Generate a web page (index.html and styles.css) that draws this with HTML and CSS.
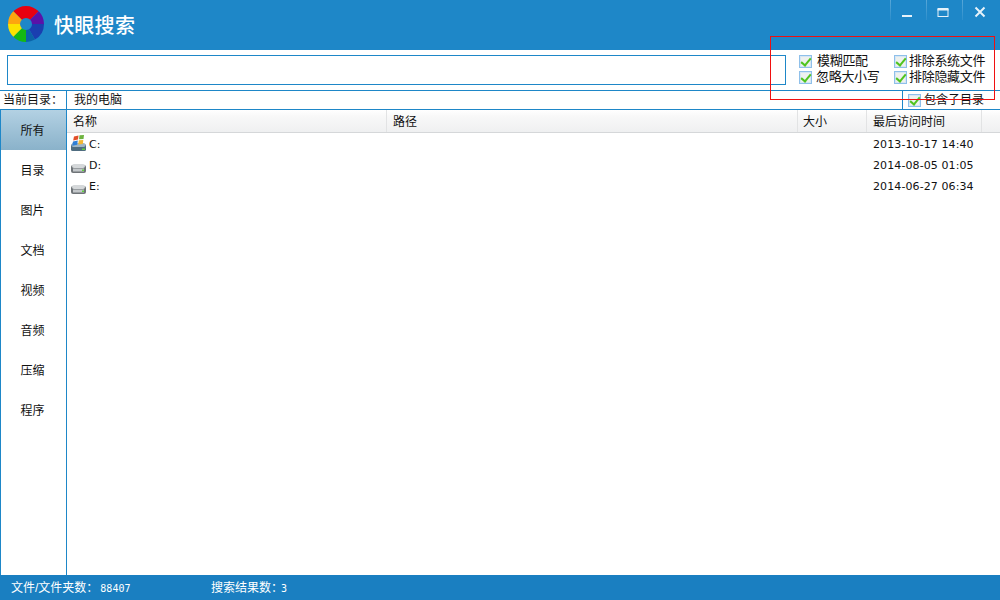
FILE: index.html
```html
<!DOCTYPE html>
<html lang="zh-CN">
<head>
  <meta charset="UTF-8" />
  <title>快眼搜索</title>
  <link rel="stylesheet" href="styles.css">
</head>
<body>
  <div class="window">
    <div class="titlebar">
      <svg class="logo" width="36" height="36" viewBox="-18 -18 36 36">
        <path d="M-12.7 -12.7A18 18 0 0 1 12.7 -12.7L4.2 -4.2A6 6 0 0 0 -4.2 -4.2Z" fill="#e8000f"/>
        <path d="M12.7 -12.7A18 18 0 0 1 18 0L6 0A6 6 0 0 0 4.2 -4.2Z" fill="#5a12a8"/>
        <path d="M18 0A18 18 0 0 1 9 15.6L3 5.2A6 6 0 0 0 6 0Z" fill="#1a3fb0"/>
        <path d="M9 15.6A18 18 0 0 1 0 18L0 6A6 6 0 0 0 3 5.2Z" fill="#0b63a8"/>
        <path d="M0 18A18 18 0 0 1 -12.7 12.7L-4.2 4.2A6 6 0 0 0 0 6Z" fill="#14b814"/>
        <path d="M-12.7 12.7A18 18 0 0 1 -18 0L-6 0A6 6 0 0 0 -4.2 4.2Z" fill="#fce200"/>
        <path d="M-18 0A18 18 0 0 1 -12.7 -12.7L-4.2 -4.2A6 6 0 0 0 -6 0Z" fill="#fda50f"/>
      </svg>
      <div class="title">快眼搜索</div>
      <div class="winbtns">
        <div class="winbtn">
          <svg width="12" height="12" viewBox="0 0 12 12"><rect x="1" y="9" width="10" height="2" fill="#e6f2fa"/></svg>
        </div>
        <div class="winbtn">
          <svg width="12" height="12" viewBox="0 0 12 12"><rect x="1" y="3.500" width="10" height="7" fill="none" stroke="#e6f2fa" stroke-width="1"/><rect x="0.500" y="2" width="11" height="2.500" fill="#e6f2fa"/></svg>
        </div>
        <div class="winbtn">
          <svg width="12" height="12" viewBox="0 0 12 12"><path d="M1.500 1.500L10.500 10.500M10.500 1.500L1.500 10.500" stroke="#e6f2fa" stroke-width="2"/></svg>
        </div>
      </div>
    </div>

    <div class="searchrow">
      <input class="searchbox" type="text" />
      <div class="options">
        <div class="optcol first">
          <div class="opt"><span class="check"></span><span class="optgap">模糊匹配</span></div>
          <div class="opt"><span class="check"></span><span>忽略大小写</span></div>
        </div>
        <div class="optcol">
          <div class="opt"><span class="check"></span><span>排除系统文件</span></div>
          <div class="opt"><span class="check"></span><span>排除隐藏文件</span></div>
        </div>
      </div>
    </div>

    <div class="pathrow">
      <div class="pathlabel">当前目录：</div>
      <div class="pathvalue">我的电脑</div>
      <div class="subdir"><span class="check"></span><span>包含子目录</span></div>
    </div>

    <div class="main">
      <ul class="sidebar">
        <li class="active">所有</li>
        <li>目录</li>
        <li>图片</li>
        <li>文档</li>
        <li>视频</li>
        <li>音频</li>
        <li>压缩</li>
        <li>程序</li>
      </ul>
      <div class="list">
        <div class="listhead">
          <div class="col c-name">名称</div>
          <div class="col c-path">路径</div>
          <div class="col c-size">大小</div>
          <div class="col c-time">最后访问时间</div>
          <div class="col c-rest"></div>
        </div>
        <div class="listrow">
          <div class="c-name cell">
            <svg class="drive" width="18" height="18" viewBox="0 0 18 18">
              <rect x="1" y="9" width="15" height="7" rx="1.500" fill="#4f6d80"/>
              <rect x="1.500" y="8" width="14" height="4" rx="2" fill="#9fb6c4"/>
              <rect x="12" y="13.500" width="3" height="1.500" fill="#5fd03c"/>
              <path d="M4 1.500L8.500 0.500L8 4.500L3.200 5.500Z" fill="#e2502a"/>
              <path d="M9.500 0.300L14 0L13.500 4L9 4.300Z" fill="#6db33f"/>
              <path d="M3 6.500L7.800 5.500L7.200 9.800L2.200 10.800Z" fill="#2f7fd6"/>
              <path d="M8.800 5.300L13.300 5L12.800 9L8.200 9.600Z" fill="#f2b632"/>
            </svg>
            <span>C:</span>
          </div>
          <div class="c-path"></div>
          <div class="c-size"></div>
          <div class="c-time cell">2013-10-17 14:40</div>
        </div>
        <div class="listrow">
          <div class="c-name cell">
            <svg class="drive" width="18" height="18" viewBox="0 0 18 18">
              <rect x="1" y="9" width="15" height="8" rx="2" fill="#6f7478"/>
              <rect x="2" y="8" width="13" height="4" rx="2" fill="#d5d8da"/>
              <rect x="3" y="12.500" width="11" height="3" fill="#c3c7ca"/>
              <rect x="12" y="13.500" width="2" height="1.500" fill="#5fd03c"/>
            </svg>
            <span>D:</span>
          </div>
          <div class="c-path"></div>
          <div class="c-size"></div>
          <div class="c-time cell">2014-08-05 01:05</div>
        </div>
        <div class="listrow">
          <div class="c-name cell">
            <svg class="drive" width="18" height="18" viewBox="0 0 18 18">
              <rect x="1" y="9" width="15" height="8" rx="2" fill="#6f7478"/>
              <rect x="2" y="8" width="13" height="4" rx="2" fill="#d5d8da"/>
              <rect x="3" y="12.500" width="11" height="3" fill="#c3c7ca"/>
              <rect x="12" y="13.500" width="2" height="1.500" fill="#5fd03c"/>
            </svg>
            <span>E:</span>
          </div>
          <div class="c-path"></div>
          <div class="c-size"></div>
          <div class="c-time cell">2014-06-27 06:34</div>
        </div>
      </div>
    </div>

    <div class="statusbar">
      <div class="stat-files">文件/文件夹数：<span class="num num-files">88407</span></div>
      <div>搜索结果数：<span class="num num-found">3</span></div>
    </div>

    <div class="redbox"></div>
  </div>
</body>
</html>
```

FILE: styles.css
```css
* {
  box-sizing: border-box;
}
body {
  margin: 0;
  font-family: "Liberation Sans", "Noto Sans CJK SC", sans-serif;
  font-size: 12px;
  color: #111;
  background-color: #fff;
}
.window {
  position: relative;
  width: 1000px;
  height: 600px;
  display: flex;
  flex-direction: column;
  overflow: hidden;
}
.titlebar {
  height: 50px;
  display: flex;
  align-items: flex-start;
  background-color: #1e87c8;
  padding: 6px 0 0 8px;
}
.logo {
  flex: none;
}
.title {
  margin: 7px 0 0 10px;
  font-family: "Noto Sans CJK SC", sans-serif;
  font-size: 20px;
  font-weight: 500;
  line-height: 24px;
  letter-spacing: 0.3px;
  color: #fff;
}
.winbtns {
  margin: -6px 0 0 auto;
  display: flex;
}
.winbtn {
  width: 36px;
  height: 20px;
  border-left: 1px solid;
  border-image: linear-gradient(#5aa8d8, #2a8dcb) 1;
  display: flex;
  align-items: center;
  justify-content: center;
  padding: 4px 3px 0 0;
}
.winbtn:last-child {
  width: 38px;
}
.searchrow {
  height: 41px;
  display: flex;
  padding: 5px 0 0 7px;
  border-bottom: 1px solid #1e87c8;
}
.searchbox {
  width: 779px;
  height: 30px;
  border: 1px solid #1e87c8;
  outline: none;
  padding: 0;
}
.options {
  display: flex;
  margin: -2px 0 0 13px;
}
.optcol {
  display: flex;
  flex-direction: column;
  font-size: 13px;
  letter-spacing: -0.3px;
}
.optcol.first {
  width: 95px;
}
.opt {
  display: flex;
  align-items: center;
  height: 16px;
  line-height: 16px;
  white-space: nowrap;
}
.optcol.first .check {
  margin-right: 4px;
}
.optgap {
  margin-left: 1px;
}
.check {
  display: inline-block;
  position: relative;
  width: 13px;
  height: 13px;
  margin-right: 2px;
  border: 1px solid #8fc0ea;
  box-shadow: inset 0 0 0 1px #d6e6f4;
  background-color: #eef1ee;
  flex: none;
}
.check::after {
  content: "";
  position: absolute;
  left: 3px;
  top: 0;
  width: 4px;
  height: 8px;
  border: solid #4fc41f;
  border-width: 0 2px 2px 0;
  transform: rotate(40deg);
}
.pathrow {
  height: 19px;
  display: flex;
  align-items: stretch;
  line-height: 19px;
  border-bottom: 1px solid #1e87c8;
}
.pathlabel {
  width: 67px;
  padding-left: 3px;
  border-right: 1px solid #1e87c8;
  white-space: nowrap;
}
.pathvalue {
  padding-left: 7px;
  flex: 1;
}
.subdir {
  width: 98px;
  display: flex;
  align-items: center;
  padding-left: 5px;
  border-left: 1px solid #1e87c8;
  white-space: nowrap;
}
.subdir .check {
  margin-right: 3px;
}
.main {
  flex: 1;
  display: flex;
  min-height: 0;
}
.sidebar {
  list-style: none;
  margin: 0;
  padding: 0;
  width: 67px;
  border-right: 1px solid #1e87c8;
  border-left: 1px solid #1e87c8;
}
.sidebar li {
  height: 40px;
  line-height: 42px;
  padding-right: 2px;
  text-align: center;
}
.sidebar li.active {
  background: linear-gradient(#b3d1e3, #8ab2ca);
}
.list {
  flex: 1;
  min-width: 0;
}
.listhead {
  height: 23px;
  display: flex;
  line-height: 24px;
  margin-bottom: 1px;
  background: linear-gradient(#ffffff, #f8f8f8 30%, #eff0f1);
  border-bottom: 1px solid #d5d7d9;
}
.col {
  padding-left: 6px;
  border-right: 1px solid #e2e3e4;
}
.c-name {
  width: 320px;
  flex: none;
}
.c-path {
  width: 411px;
  flex: none;
}
.c-size {
  width: 69px;
  flex: none;
}
.col.c-size {
  padding-left: 5px;
}
.c-time {
  width: 115px;
  flex: none;
}
.c-rest {
  flex: 1;
  border-right: 0;
}
.listrow {
  height: 21px;
  display: flex;
  line-height: 21px;
  font-family: "DejaVu Sans", "Noto Sans CJK SC", sans-serif;
  font-size: 11px;
}
.cell {
  padding-left: 6px;
  white-space: nowrap;
  letter-spacing: 0.1px;
}
.c-name.cell {
  display: flex;
  padding-left: 3px;
  gap: 1px;
}
.drive {
  margin-top: 1px;
  flex: none;
}
.statusbar {
  height: 25px;
  display: flex;
  align-items: center;
  padding: 0 0 2px 11px;
  background-color: #1a7fc1;
  color: #fff;
}
.stat-files {
  width: 200px;
}
.num {
  font-family: "DejaVu Sans Mono", monospace;
  font-size: 10px;
}
.num-files {
  margin-left: 2px;
}
.num-found {
  margin-left: -2px;
}
.redbox {
  position: absolute;
  left: 770px;
  top: 36px;
  width: 225px;
  height: 64px;
  border: 1px solid #f01010;
}
```
